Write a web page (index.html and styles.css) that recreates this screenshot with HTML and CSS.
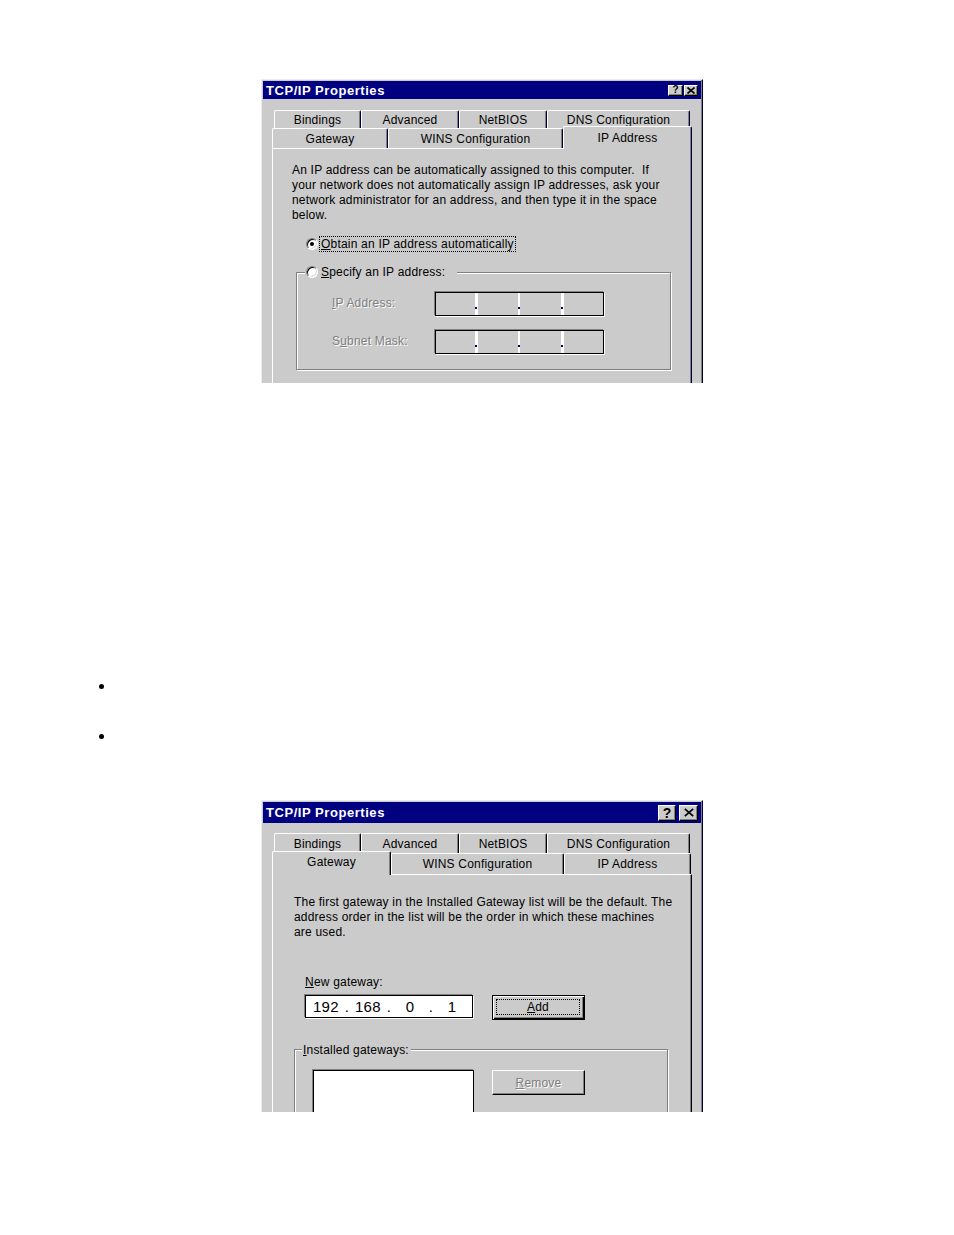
FILE: index.html
```html
<!DOCTYPE html>
<html>
<head>
<meta charset="utf-8">
<title>TCP/IP Properties</title>
<link rel="stylesheet" href="styles.css">
</head>
<body>
<div class="dialog d1">
  <div class="titlebar">
    <span class="title">TCP/IP Properties</span>
    <div class="tbtns">
      <span class="tbtn help">?</span>
      <span class="tbtn close"><svg class="xicon" viewBox="0 0 8 7"><path d="M0.5 0.5 L7.5 6.5 M7.5 0.5 L0.5 6.5" /></svg></span>
    </div>
  </div>
  <div class="tabs">
    <div class="tabrow row1">
      <div class="tab t-bind">Bindings</div>
      <div class="tab t-adv">Advanced</div>
      <div class="tab t-nb">NetBIOS</div>
      <div class="tab t-dns">DNS Configuration</div>
    </div>
    <div class="tabrow row2">
      <div class="tab t-gw">Gateway</div>
      <div class="tab t-wins">WINS Configuration</div>
      <div class="tab t-ip sel">IP Address</div>
    </div>
  </div>
  <div class="panel">
    <p class="desc">An IP address can be automatically assigned to this computer.&nbsp; If<br>your network does not automatically assign IP addresses, ask your<br>network administrator for an address, and then type it in the space<br>below.</p>
    <div class="opt"><span class="radio checked"></span><span class="focus"><u>O</u>btain an IP address automatically</span></div>
    <fieldset class="group g1">
      <legend><span class="legend-in"><span class="radio"></span><span class="lg-text"><u>S</u>pecify an IP address:</span></span></legend>
      <div class="iprow">
        <span class="lbl dis"><u>I</u>P Address:</span>
        <div class="ipbox">
          <span class="seg sg1"></span><span class="sep w3"><i></i></span>
          <span class="seg sg2"></span><span class="sep w2"><i></i></span>
          <span class="seg sg3"></span><span class="sep w3"><i></i></span>
          <span class="seg sg4"></span>
        </div>
      </div>
      <div class="iprow second">
        <span class="lbl dis">S<u>u</u>bnet Mask:</span>
        <div class="ipbox">
          <span class="seg sg1"></span><span class="sep w3"><i></i></span>
          <span class="seg sg2"></span><span class="sep w2"><i></i></span>
          <span class="seg sg3"></span><span class="sep w3"><i></i></span>
          <span class="seg sg4"></span>
        </div>
      </div>
    </fieldset>
  </div>
</div>

<ul class="bullets">
  <li>&nbsp;</li>
  <li>&nbsp;</li>
</ul>

<div class="dialog d2">
  <div class="titlebar">
    <span class="title">TCP/IP Properties</span>
    <div class="tbtns">
      <span class="tbtn help">?</span>
      <span class="tbtn close"><svg class="xicon" viewBox="0 0 10 9"><path d="M0.8 0.8 L9.2 8.2 M9.2 0.8 L0.8 8.2" /></svg></span>
    </div>
  </div>
  <div class="tabs">
    <div class="tabrow row1">
      <div class="tab t-bind">Bindings</div>
      <div class="tab t-adv">Advanced</div>
      <div class="tab t-nb">NetBIOS</div>
      <div class="tab t-dns">DNS Configuration</div>
    </div>
    <div class="tabrow row2">
      <div class="tab t-gw sel">Gateway</div>
      <div class="tab t-wins">WINS Configuration</div>
      <div class="tab t-ip">IP Address</div>
    </div>
  </div>
  <div class="panel">
    <p class="desc">The first gateway in the Installed Gateway list will be the default. The<br>address order in the list will be the order in which these machines<br>are used.</p>
    <div class="newlbl"><u>N</u>ew gateway:</div>
    <div class="gwrow">
      <div class="gwinput">
        <span class="oct">192</span><span class="dot">.</span>
        <span class="oct">168</span><span class="dot">.</span>
        <span class="oct">0</span><span class="dot">.</span>
        <span class="oct">1</span>
      </div>
      <div class="btn default"><span class="btn-focus"><u>A</u>dd</span></div>
    </div>
    <fieldset class="group g2">
      <legend><span class="legend-in"><span class="lg-text"><u>I</u>nstalled gateways:</span></span></legend>
      <div class="lbrow">
        <div class="listbox"></div>
        <div class="btn disabled"><span class="dis"><u>R</u>emove</span></div>
      </div>
    </fieldset>
  </div>
</div>
</body>
</html>
```

FILE: styles.css
```css
* { box-sizing: border-box; }

body {
  margin: 0;
  background: #ffffff;
  font-family: "Liberation Sans", Arial, sans-serif;
}

/* ---------- dialog frame ---------- */
.dialog {
  margin-left: 261px;
  width: 442px;
  background: #cbcbcb;
  border-top: 1px solid #ececec;
  border-left: 1px solid #ececec;
  border-right: 1px solid #00003c;
  padding: 1px 1px 0 1px;
  box-shadow: inset -1px 0 0 #808080;
  overflow: hidden;
  font-size: 12px;
  letter-spacing: 0.2px;
  color: #000;
}

.d1 { margin-top: 79px; height: 304px; }
.d2 { margin-top: 54px; height: 312px; }

/* ---------- title bar ---------- */
.titlebar {
  display: flex;
  align-items: center;
  justify-content: space-between;
  background: #000080;
  color: #fff;
  height: 18px;
  padding: 0 3px 0 3px;
}
.d2 .titlebar { height: 21px; }

.title {
  font-weight: bold;
  font-size: 13px;
  letter-spacing: 0.55px;
}

.tbtns { display: flex; gap: 1px; }
.d2 .tbtns { gap: 3px; }

.tbtn {
  display: flex;
  align-items: center;
  justify-content: center;
  background: #cbcbcb;
  border: 1px solid;
  border-color: #ffffff #000000 #000000 #ffffff;
  box-shadow: inset -1px -1px 0 #808080;
  color: #000;
  font-weight: bold;
  width: 15px;
  height: 11px;
  font-size: 10px;
  line-height: 1;
  letter-spacing: 0;
}
.d1 .tbtn.close { width: 14px; }
.d2 .tbtn { height: 16px; width: 18px; font-size: 14px; }
.d2 .tbtn.close { width: 19px; }

.xicon { width: 8px; height: 7px; }
.d2 .xicon { width: 10px; height: 9px; }
.xicon path { stroke: #000; stroke-width: 1.7; fill: none; }

/* ---------- tabs ---------- */
.tabs { margin-top: 11px; }
.d2 .tabs { margin-top: 10px; }

.tabrow { display: flex; }
.row1 { padding-left: 11px; height: 18px; }
.row2 { padding-left: 9px; height: 20px; align-items: flex-end; }
.d2 .row1 { height: 20px; }
.d2 .row2 { height: 21px; }

.tab {
  height: 100%;
  background: #cbcbcb;
  border-top: 1px solid #ffffff;
  border-left: 1px solid #ffffff;
  border-right: 1px solid #00003c;
  border-radius: 2px 2px 0 0;
  box-shadow: inset -1px 0 0 #808080;
  display: flex;
  align-items: center;
  justify-content: center;
  white-space: nowrap;
}
.d2 .tab { border-right-color: #000; }

.tab.sel {
  height: 23px;
  margin-bottom: -1px;
  position: relative;
  z-index: 2;
  padding-bottom: 1px;
}
.d2 .tab.sel { height: 24px; padding-bottom: 3px; }

.t-bind { width: 87px; }
.t-adv { width: 98px; }
.t-nb { width: 88px; }
.t-dns { width: 143px; }

.d1 .t-gw { width: 116px; }
.d1 .t-wins { width: 175px; }
.d1 .t-ip { width: 129px; }

.d2 .t-gw { width: 119px; }
.d2 .t-wins { width: 173px; }
.d2 .t-ip { width: 127px; }

/* ---------- panel ---------- */
.panel {
  position: relative;
  z-index: 1;
  margin-left: 9px;
  width: 420px;
  height: 400px;
  border-top: 1px solid #ffffff;
  border-left: 1px solid #ffffff;
  border-right: 1px solid #00003c;
  box-shadow: inset -1px 0 0 #808080;
}
.d2 .panel { border-right-color: #000; }

.desc {
  margin: 14px 0 0 19px;
  line-height: 15px;
  white-space: nowrap;
}
.d2 .desc { margin: 20px 0 0 21px; }

u { text-decoration: underline; text-underline-offset: 1px; }

/* radios */
.radio {
  display: inline-block;
  flex: none;
  width: 12px;
  height: 12px;
  border-radius: 50%;
  background: #fff;
  border: 1px solid;
  border-color: #808080 #ffffff #ffffff #808080;
  box-shadow: inset 1px 1px 0 #000, inset -1px -1px 0 #dcdcdc;
  display: flex;
  align-items: center;
  justify-content: center;
}
.radio.checked::after {
  content: "";
  width: 4px;
  height: 4px;
  border-radius: 50%;
  background: #000;
}

.opt {
  margin: 13px 0 0 33px;
  height: 16px;
  display: flex;
  align-items: center;
}
.focus {
  margin-left: 1px;
  padding: 0 1px;
  line-height: 14px;
  border: 1px dotted #000;
}

/* group boxes */
.group {
  margin: 12px 0 0 23px;
  padding: 0 0 15px 0;
  width: 375px;
  min-width: 0;
  border: 1px solid #808080;
  box-shadow: inset 1px 1px 0 #ffffff, 1px 1px 0 #ffffff;
}
.group legend {
  margin-left: 8px;
  padding: 0 12px 0 1px;
  background: #cbcbcb;
}
.legend-in {
  display: flex;
  align-items: center;
  height: 16px;
}
.legend-in .lg-text { margin-left: 3px; }

.g2 {
  margin: 21px 0 0 21px;
  width: 374px;
}
.g2 legend { margin-left: 7px; padding: 0 2px 0 1px; }
.g2 .legend-in { height: 17px; padding-top: 1px; }
.g2 .legend-in .lg-text { margin-left: 0; }

.iprow {
  display: flex;
  align-items: center;
  margin-top: 12px;
  padding-left: 35px;
}
.iprow.second { margin-top: 14px; }

.lbl { width: 103px; padding-bottom: 3px; }

.dis {
  color: #808080;
  text-shadow: 1px 1px 0 #ffffff;
}

.ipbox {
  display: flex;
  width: 169px;
  height: 24px;
  border: 1px solid #000;
  box-shadow: -1px -1px 0 #808080, 1px 1px 0 #ffffff;
  background: #cbcbcb;
}
.seg { height: 100%; }
.sg1 { width: 39px; }
.sg2 { width: 40px; }
.sg3 { width: 41px; }
.sg4 { width: 39px; }
.sep {
  height: 100%;
  background: #ffffff;
  display: flex;
  flex-direction: column;
  justify-content: flex-end;
  padding-bottom: 6px;
}
.sep.w3 { width: 3px; }
.sep.w2 { width: 2px; }
.sep i {
  display: block;
  width: 2px;
  height: 2px;
  background: #000080;
}

/* gateway page */
.newlbl {
  margin: 35px 0 0 32px;
  line-height: 15px;
}
.gwrow {
  display: flex;
  align-items: flex-start;
  margin: 5px 0 0 32px;
}
.gwinput {
  display: flex;
  align-items: center;
  width: 168px;
  height: 23px;
  background: #ffffff;
  border: 1px solid #000;
  box-shadow: -1px -1px 0 #808080, 1px 1px 0 #ffffff;
  font-size: 15px;
  letter-spacing: 0.4px;
}
.oct { width: 40px; text-align: center; }
.dot { width: 2px; display: flex; justify-content: center; }

.btn {
  display: flex;
  width: 93px;
  height: 25px;
  margin-left: 19px;
  background: #cbcbcb;
  align-items: center;
  justify-content: center;
}
.btn.default {
  border: 1px solid #000;
  box-shadow: inset 1px 1px 0 #ffffff, inset -1px -1px 0 #000, inset -2px -2px 0 #808080;
  padding: 3px 4px 4px 3px;
}
.btn-focus {
  flex: 1;
  align-self: stretch;
  border: 1px dotted #000;
  display: flex;
  align-items: center;
  justify-content: center;
}
.btn.disabled {
  margin-left: 18px;
  border: 1px solid;
  border-color: #ffffff #000 #000 #ffffff;
  box-shadow: inset -1px -1px 0 #808080;
}

.lbrow {
  display: flex;
  align-items: flex-start;
  margin-top: 12px;
  padding-left: 18px;
}
.listbox {
  width: 161px;
  height: 90px;
  background: #ffffff;
  border: 1px solid #000;
  box-shadow: -1px -1px 0 #808080;
}

/* ---------- bullets ---------- */
.bullets {
  margin: 293px 0 0 75px;
  padding-left: 40px;
  list-style: disc;
  font-family: "Liberation Serif", "Times New Roman", serif;
  font-size: 16px;
}
.bullets li {
  line-height: 20px;
  margin-bottom: 30px;
}
.bullets li:last-child { margin-bottom: 0; }
```
